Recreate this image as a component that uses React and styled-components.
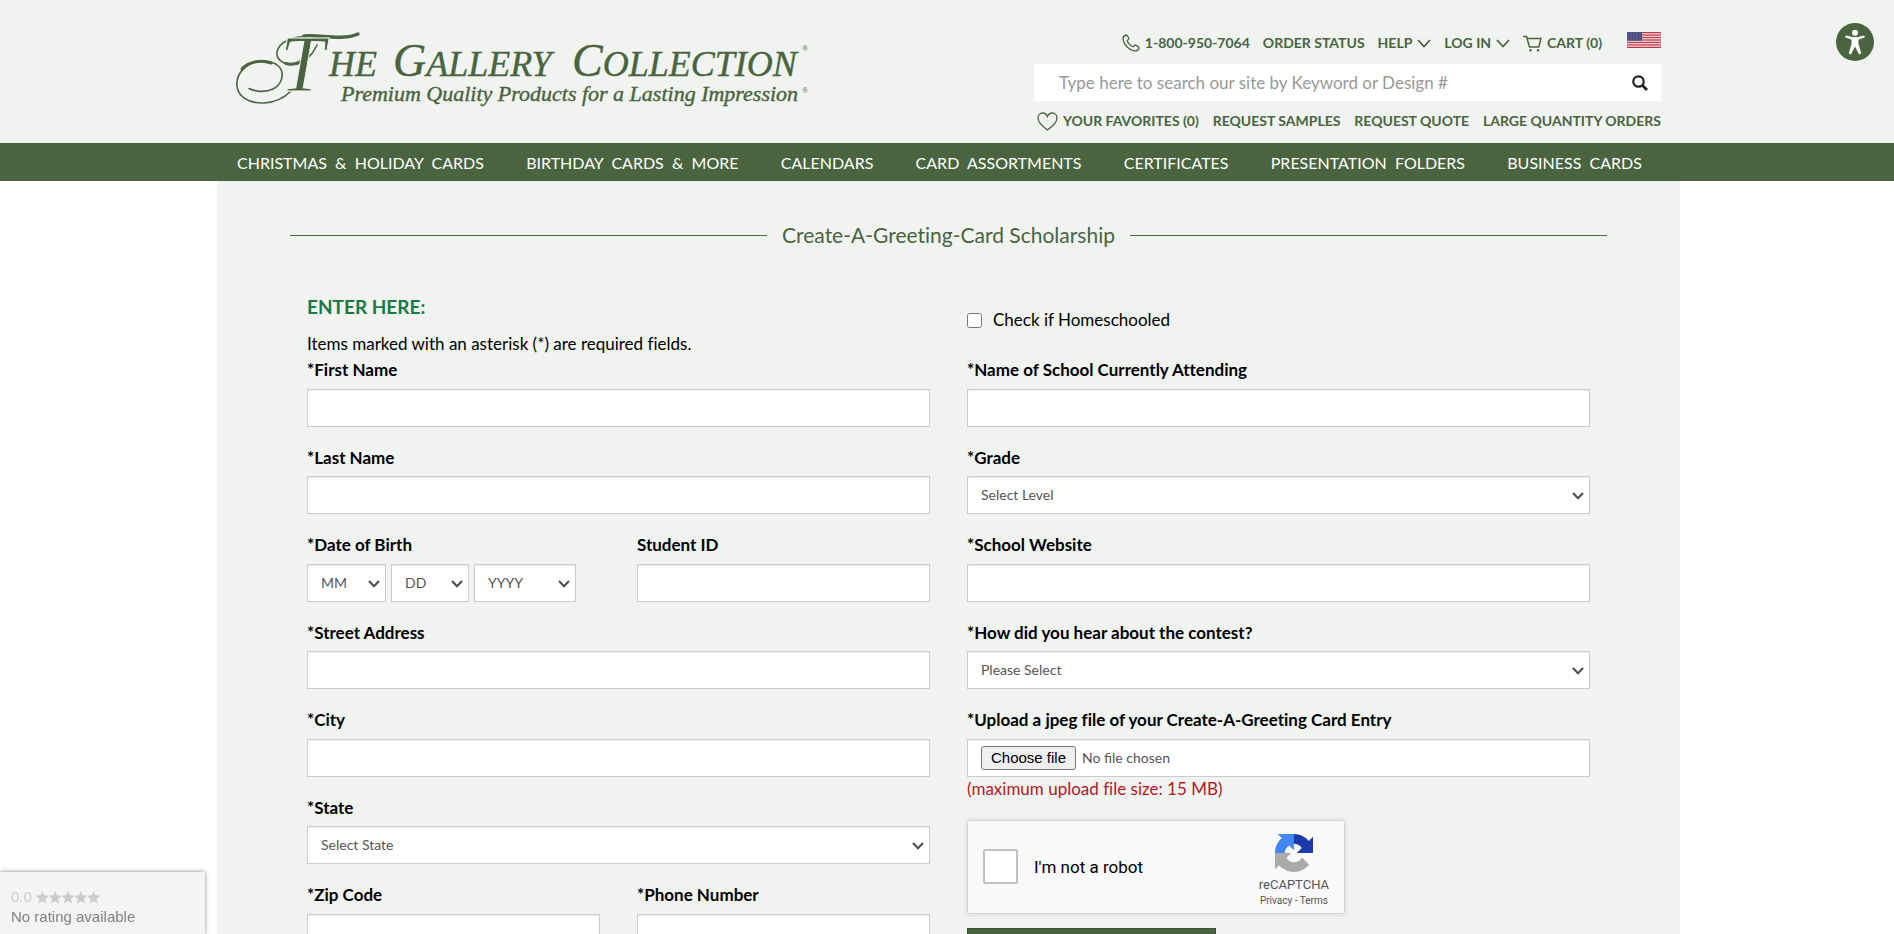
import React from "react";
import styled, { createGlobalStyle } from "styled-components";

const green = "#49643f";
const pale = "#f0f3f0";

const Global = createGlobalStyle`
  *, *::before, *::after { box-sizing: border-box; }
  body {
    margin: 0;
    background: #fff;
    color: #000;
    font-family: Lato, "Open Sans", sans-serif;
    font-size: 17px;
    font-weight: 400;
    font-variant-ligatures: none;
    line-height: 1.5;
  }
`;

const Header = styled.header`
  background: ${pale};
  padding-left: 3px;
`;

const HeaderInner = styled.div`
  display: flex;
  justify-content: space-between;
  align-items: flex-start;
  max-width: 1425px;
  margin: 0 auto;
  padding: 14px 0 2px;
`;

const LogoLink = styled.a`
  display: block;
  svg { display: block; }
`;

const Tools = styled.div`
  width: 627px;
  padding-top: 12px;
`;

const ToolRow = styled.div`
  display: flex;
  align-items: center;
  justify-content: ${(p) => (p.$spread ? "space-between" : "flex-end")};
  gap: ${(p) => (p.$spread ? "0" : "13px")};
  height: ${(p) => (p.$spread ? "40px" : "34px")};
  padding-left: 3px;
`;

const ToolLink = styled.a`
  display: flex;
  align-items: center;
  gap: 5px;
  color: ${green};
  font-size: 14px;
  font-weight: 700;
  line-height: 20px;
  text-decoration: none;
  white-space: nowrap;
  svg { flex: none; }
`;

const MenuButton = styled.button`
  display: flex;
  align-items: center;
  gap: 5px;
  padding: 0;
  border: 0;
  background: none;
  color: ${green};
  font: 700 14px/20px Lato, "Open Sans", sans-serif;
  white-space: nowrap;
`;

const FlagButton = styled.button`
  align-self: flex-start;
  margin: 6px 0 0 12px;
  padding: 0;
  border: 0;
  background: none;
  svg { display: block; }
`;

const Search = styled.form`
  display: flex;
  height: 37px;
  margin-top: 4px;
  background: #fff;
`;

const SearchInput = styled.input`
  flex: 1;
  min-width: 0;
  padding: 0 0 0 25px;
  border: 0;
  background: none;
  color: #333;
  font: 400 17px/24px Lato, "Open Sans", sans-serif;
  &::placeholder { color: #999; opacity: 1; }
`;

const SearchButton = styled.button`
  display: flex;
  align-items: center;
  justify-content: center;
  width: 42px;
  padding: 0;
  border: 0;
  background: none;
`;

const Nav = styled.nav`
  background: ${green};
  padding-left: 3px;
`;

const NavList = styled.ul`
  display: flex;
  justify-content: space-between;
  max-width: 1425px;
  height: 38px;
  margin: 0 auto;
  padding: 0 19px 0 1px;
  list-style: none;
`;

const NavLink = styled.a`
  color: #fff;
  font-size: 16px;
  line-height: 40px;
  text-decoration: none;
  white-space: pre;
`;

const Page = styled.div`
  padding-left: 3px;
`;

const Sheet = styled.main`
  max-width: 1463px;
  min-height: calc(100vh - 181px);
  margin: 0 auto;
  padding: 37px 73px 24px;
  background: ${pale};
`;

const Title = styled.h1`
  display: flex;
  align-items: center;
  gap: 15px;
  margin: 0 0 38px;
  color: ${green};
  font-size: 21px;
  font-weight: 400;
  line-height: 34px;
  white-space: nowrap;
  &::before, &::after {
    content: "";
    flex: 1;
    height: 1px;
    background: ${green};
  }
`;

const Form = styled.form`
  display: grid;
  grid-template-columns: 1fr 1fr;
  gap: 37px;
  padding: 0 17px;
`;

const Column = styled.div`
  min-width: 0;
`;

const ColumnHead = styled.div`
  height: 67px;
`;

const Heading = styled.h2`
  margin: 0 0 8px;
  color: #1a7a45;
  font-size: 19px;
  font-weight: 700;
  line-height: 34px;
`;

const Note = styled.p`
  margin: 0;
  font-size: 17px;
  line-height: 24px;
`;

const CheckLabel = styled.label`
  display: flex;
  align-items: center;
  gap: 11px;
  padding-top: 18px;
  line-height: 24px;
  input { width: 15px; height: 15px; margin: 0; }
`;

const Field = styled.div`
  margin-bottom: ${(p) => (p.$tight ? "0" : "18px")};
`;

const Label = styled.label`
  display: block;
  margin-bottom: 6px;
  font-size: 17px;
  font-weight: 700;
`;

const GroupLabel = styled.span`
  display: block;
  margin-bottom: 6px;
  font-size: 17px;
  font-weight: 700;
`;

const control = `
  width: 100%;
  height: 38px;
  border: 1px solid #ccc;
  border-radius: 0;
  background-color: #fff;
  box-shadow: inset 0 1px 1px rgba(0, 0, 0, 0.075);
  color: #555;
  font: 400 14px/20px Lato, "Open Sans", sans-serif;
`;

const Input = styled.input`
  ${control}
  display: block;
  padding: 6px 12px;
`;

const SelectBox = styled.div`
  position: relative;
  width: ${(p) => p.$w || "100%"};
  svg {
    position: absolute;
    top: 16px;
    right: 6px;
    pointer-events: none;
  }
`;

const Select = styled.select`
  ${control}
  display: block;
  appearance: none;
  padding: 6px 13px;
`;

const Pair = styled.div`
  display: grid;
  grid-template-columns: 1fr 1fr;
  gap: 37px;
`;

const DateRow = styled.div`
  display: flex;
  gap: 5px;
`;

const FileBox = styled.label`
  ${control}
  position: relative;
  display: flex;
  align-items: center;
  gap: 6px;
  padding: 0 13px;
  input {
    position: absolute;
    inset: 0;
    width: 100%;
    opacity: 0;
  }
`;

const FileButton = styled.span`
  padding: 0 9px;
  border: 1px solid #767676;
  border-radius: 3px;
  background: #efefef;
  color: #000;
  font: 400 15px/22px "Liberation Sans", Arial, sans-serif;
`;

const Limit = styled.p`
  margin: 0 0 19px;
  color: #b8171b;
  font-size: 17px;
  line-height: 24px;
`;

const Captcha = styled.div`
  display: flex;
  align-items: center;
  justify-content: space-between;
  width: 378px;
  height: 94px;
  margin-bottom: 14px;
  padding: 0 15px;
  border: 1px solid #d3d3d3;
  border-radius: 3px;
  background: #f9f9f9;
  box-shadow: 0 0 4px 1px rgba(0, 0, 0, 0.08);
  font-family: Roboto, sans-serif;
`;

const RobotLabel = styled.label`
  display: flex;
  align-items: center;
  gap: 16px;
  font-size: 17px;
  line-height: 24px;
  input {
    appearance: none;
    width: 35px;
    height: 35px;
    margin: 0;
    border: 2px solid #c1c1c1;
    border-radius: 2px;
    background: #fff;
  }
`;

const Badge = styled.div`
  display: flex;
  flex-direction: column;
  align-items: center;
  padding-top: 10px;
  color: #555;
  font-size: 13px;
  line-height: 16px;
  small { font-size: 10px; }
  a { color: inherit; text-decoration: none; }
  svg { display: block; margin-bottom: 5px; }
`;

const Submit = styled.button`
  width: 249px;
  height: 46px;
  border: 1px solid #3a5232;
  background: ${green};
`;

const Rating = styled.aside`
  position: fixed;
  left: 0;
  bottom: 0;
  width: 205px;
  height: 62px;
  padding: 15px 11px 0;
  background: #f4f4f4;
  box-shadow: 0 0 4px rgba(0, 0, 0, 0.5);
  color: #808080;
  font: 400 15px/20px "Liberation Sans", Arial, sans-serif;
`;

const Score = styled.div`
  display: flex;
  align-items: center;
  gap: 4px;
  color: #ccc;
`;

const Access = styled.button`
  position: fixed;
  top: 23px;
  right: 20px;
  width: 38px;
  height: 38px;
  padding: 0;
  border: 0;
  border-radius: 50%;
  background: ${green};
  svg { display: block; }
`;

const Logo = () => (
  <svg width="580" height="100" viewBox="236 14 580 100" fill={green} fontFamily="Liberation Serif, Times New Roman, serif" fontStyle="italic" overflow="visible" role="img" aria-label="The Gallery Collection">
    <g fill="none" stroke={green} strokeLinecap="round">
      <path d="M249 88.500C256 92 266 92.500 273 89C281 85 284 76 281 69.500C278 63 269 60.500 260 61.500C246 63 237 73 236.800 84C237 97 249 103.500 264 103C276 102.500 284 98 291 91" strokeWidth="1.600" />
      <path d="M242 69C248 62 261 59 271 63" strokeWidth="3" />
      <path d="M317 45C313 54 305 64 294 64.500C284 65 276 60 277 52C279 42 292 36 312 36" strokeWidth="1.600" />
      <path d="M286 63.500C295 66 303 61 309 55" strokeWidth="3" />
      <path d="M304 36C320 34.500 342 41 358 34" strokeWidth="3.400" />
    </g>
    <text x="280" y="91" fontSize="80" stroke={pale} strokeWidth="1">T</text>
    <g stroke={green} strokeWidth="0.400">
      <text y="76" fontSize="36">
        <tspan x="329">HE</tspan>
        <tspan x="393" fontSize="46">G</tspan>
        <tspan>ALLERY</tspan>
        <tspan x="572" fontSize="46">C</tspan>
        <tspan>OLLECTION</tspan>
      </text>
      <text x="341" y="101" fontSize="22">Premium Quality Products for a Lasting Impression</text>
    </g>
    <text x="802" y="51" fontSize="8" fontStyle="normal">®</text>
    <text x="802" y="93" fontSize="8" fontStyle="normal">®</text>
  </svg>
);

const Chevron = () => (
  <svg width="14" height="9" viewBox="0 0 14 9" fill="none" stroke={green} strokeWidth="1.800">
    <path d="M1 1L7 7.500L13 1" />
  </svg>
);

const Phone = () => (
  <svg width="18" height="18" viewBox="0 0 18 18" fill="none" stroke={green} strokeWidth="1.300" strokeLinejoin="round">
    <path d="M4.200 1C2 1.600 .8 3.400 1.100 5.600C2 11 7 16 12.400 16.900C14.600 17.200 16.600 16 17.100 13.800C17.100 13.100 13.900 10.900 13.100 11.100C12.400 11.300 12 12.800 11.200 12.700C9 12.200 5.800 9 5.300 6.800C5.200 6 6.800 5.600 6.900 4.900C7.100 4.100 4.900 1 4.200 1Z" />
  </svg>
);

const Cart = () => (
  <svg width="19" height="17" viewBox="0 0 19 17" fill="none" stroke={green} strokeWidth="1.500">
    <path d="M0 1.500H3.500L6.500 12H16M4.200 3.500H18L15.800 12" />
    <circle cx="7.500" cy="15.300" r="1.200" fill={green} stroke="none" />
    <circle cx="15" cy="15.300" r="1.200" fill={green} stroke="none" />
  </svg>
);

const Heart = () => (
  <svg width="21" height="19" viewBox="0 0 21 19" fill="none" stroke={green} strokeWidth="1.300">
    <path d="M10.500 18C7 15.500 1 11 1 6C1 3 3 1 5.600 1C8 1 9.800 2.600 10.500 4.600C11.200 2.600 13 1 15.400 1C18 1 20 3 20 6C20 11 14 15.500 10.500 18Z" />
  </svg>
);

const Flag = () => (
  <svg width="34" height="16" viewBox="0 0 34 16">
    <rect width="34" height="16" fill="#f3dcdf" />
    {[0, 1, 2, 3, 4, 5, 6].map((i) => (
      <rect key={i} y={i * 2.46} width="34" height="1.230" fill="#b83a4b" />
    ))}
    <rect width="15" height="8.600" fill="#4a4b7c" />
    {[1, 3, 5, 7].map((y) =>
      [1, 4, 7, 10, 13].map((x) => <circle key={`${x}-${y}`} cx={x} cy={y} r=".4" fill="#b9b9d2" />)
    )}
  </svg>
);

const Recaptcha = () => (
  <svg width="38" height="38" viewBox="0 0 64 64">
    <path fill="#1c3aa9" d="M64 31.955l-.033-1.370V4.687l-7.160 7.160C50.948 4.674 42.033.093 32.050.093c-10.389 0-19.622 4.960-25.458 12.640l11.736 11.860a15.550 15.550 0 0 1 4.754-5.334c2.050-1.600 4.952-2.906 8.968-2.906.485 0 .86.057 1.135.163 4.976.393 9.288 3.140 11.828 7.124l-8.307 8.307c10.522-.04 22.400-.066 27.295.005" />
    <path fill="#4285f4" d="M31.862.094l-1.370.033H4.594l7.160 7.160C4.580 13.147 0 22.060 0 32.046c0 10.388 4.960 19.622 12.640 25.458L24.500 45.768a15.550 15.550 0 0 1-5.334-4.754c-1.600-2.050-2.906-4.952-2.906-8.968 0-.485.057-.86.163-1.135.393-4.976 3.140-9.288 7.124-11.828l8.307 8.307c-.04-10.522-.066-22.400.005-27.295" />
    <path fill="#ababab" d="M.001 32.045l.033 1.370v25.898l7.160-7.160c5.860 7.173 14.774 11.754 24.760 11.754 10.388 0 19.622-4.960 25.458-12.640l-11.736-11.860a15.550 15.550 0 0 1-4.754 5.334c-2.050 1.600-4.952 2.906-8.968 2.906-.485 0-.86-.057-1.135-.163-4.976-.393-9.288-3.140-11.828-7.124l8.307-8.307c-10.522.04-22.400.066-27.295-.005" />
  </svg>
);

const Stars = () => (
  <svg width="64" height="13" viewBox="0 0 65 13" fill="#ccc">
    {[0, 13, 26, 39, 52].map((x) => (
      <path key={x} transform={`translate(${x} 0)`} d="M6.500 0L8.300 4.300L13 4.800L9.500 7.900L10.500 12.500L6.500 10.100L2.500 12.500L3.500 7.900L0 4.800L4.700 4.300Z" />
    ))}
  </svg>
);

const Person = () => (
  <svg width="38" height="38" viewBox="0 0 38 38" fill="#fff">
    <circle cx="19" cy="9.800" r="3" />
    <path d="M10.500 12.600L16 14H22L27.500 12.600Q29 12.600 28.800 14.200L22.500 16.700V21L25.200 30Q24.500 31.800 22.800 31L19 23.500L15.200 31Q13.500 31.800 12.800 30L15.500 21V16.700L9.200 14.200Q9 12.600 10.500 12.600Z" />
  </svg>
);

const navItems = [
  "CHRISTMAS  &  HOLIDAY  CARDS",
  "BIRTHDAY  CARDS  &  MORE",
  "CALENDARS",
  "CARD  ASSORTMENTS",
  "CERTIFICATES",
  "PRESENTATION  FOLDERS",
  "BUSINESS  CARDS",
];

const DropDown = ({ option, width, ...rest }) => (
  <SelectBox $w={width}>
    <Select {...rest}>
      <option>{option}</option>
    </Select>
    <svg width="12" height="8" viewBox="0 0 12 8" fill="none" stroke="#4d4d4d" strokeWidth="2">
      <path d="M1 1L6 6.300L11 1" />
    </svg>
  </SelectBox>
);

const TextField = ({ id, label, type = "text" }) => (
  <Field>
    <Label htmlFor={id}>{label}</Label>
    <Input id={id} type={type} />
  </Field>
);

const SelectField = ({ id, label, option }) => (
  <Field>
    <Label htmlFor={id}>{label}</Label>
    <DropDown id={id} option={option} />
  </Field>
);

export default function App() {
  return (
    <>
      <Global />
      <Header>
        <HeaderInner>
          <LogoLink href="#home"><Logo /></LogoLink>
          <Tools>
            <ToolRow>
              <ToolLink href="tel:18009507064"><Phone />1-800-950-7064</ToolLink>
              <ToolLink href="#status">ORDER STATUS</ToolLink>
              <MenuButton type="button">HELP<Chevron /></MenuButton>
              <MenuButton type="button">LOG IN<Chevron /></MenuButton>
              <ToolLink href="#cart"><Cart />CART (0)</ToolLink>
              <FlagButton type="button" aria-label="United States"><Flag /></FlagButton>
            </ToolRow>
            <Search role="search">
              <SearchInput type="text" aria-label="Search" placeholder="Type here to search our site by Keyword or Design #" />
              <SearchButton type="button" aria-label="Search">
                <svg width="16" height="16" viewBox="0 0 16 16" fill="none" stroke="#222" strokeWidth="2.200">
                  <circle cx="6.500" cy="6.500" r="5.200" />
                  <path d="M10.300 10.300L15 15" strokeWidth="2.800" />
                </svg>
              </SearchButton>
            </Search>
            <ToolRow $spread>
              <ToolLink href="#favorites"><Heart />YOUR FAVORITES (0)</ToolLink>
              <ToolLink href="#samples">REQUEST SAMPLES</ToolLink>
              <ToolLink href="#quote">REQUEST QUOTE</ToolLink>
              <ToolLink href="#large">LARGE QUANTITY ORDERS</ToolLink>
            </ToolRow>
          </Tools>
        </HeaderInner>
      </Header>
      <Nav>
        <NavList>
          {navItems.map((t) => (
            <li key={t}><NavLink href="#cards">{t}</NavLink></li>
          ))}
        </NavList>
      </Nav>
      <Page>
        <Sheet>
          <Title>Create-A-Greeting-Card Scholarship</Title>
          <Form>
            <Column>
              <ColumnHead>
                <Heading>ENTER HERE:</Heading>
                <Note>Items marked with an asterisk (*) are required fields.</Note>
              </ColumnHead>
              <TextField id="first" label="*First Name" />
              <TextField id="last" label="*Last Name" />
              <Pair>
                <Field>
                  <GroupLabel id="dob">*Date of Birth</GroupLabel>
                  <DateRow role="group" aria-labelledby="dob">
                    <DropDown aria-label="Month" width="79px" option="MM" />
                    <DropDown aria-label="Day" width="78px" option="DD" />
                    <DropDown aria-label="Year" width="102px" option="YYYY" />
                  </DateRow>
                </Field>
                <TextField id="student" label="Student ID" />
              </Pair>
              <TextField id="street" label="*Street Address" />
              <TextField id="city" label="*City" />
              <SelectField id="state" label="*State" option="Select State" />
              <Pair>
                <TextField id="zip" label="*Zip Code" />
                <TextField id="phone" label="*Phone Number" type="tel" />
              </Pair>
            </Column>
            <Column>
              <ColumnHead>
                <CheckLabel><input type="checkbox" />Check if Homeschooled</CheckLabel>
              </ColumnHead>
              <TextField id="school" label="*Name of School Currently Attending" />
              <SelectField id="grade" label="*Grade" option="Select Level" />
              <TextField id="site" label="*School Website" />
              <SelectField id="hear" label="*How did you hear about the contest?" option="Please Select" />
              <Field $tight>
                <Label htmlFor="entry">*Upload a jpeg file of your Create-A-Greeting Card Entry</Label>
                <FileBox>
                  <input id="entry" type="file" accept="image/jpeg" />
                  <FileButton>Choose file</FileButton>
                  <span>No file chosen</span>
                </FileBox>
              </Field>
              <Limit>(maximum upload file size: 15 MB)</Limit>
              <Captcha>
                <RobotLabel><input type="checkbox" />I'm not a robot</RobotLabel>
                <Badge>
                  <Recaptcha />
                  reCAPTCHA
                  <small><a href="#privacy">Privacy</a> - <a href="#terms">Terms</a></small>
                </Badge>
              </Captcha>
              <Submit type="button" aria-label="Submit" />
            </Column>
          </Form>
        </Sheet>
      </Page>
      <Rating>
        <Score>0.0 <Stars /></Score>
        No rating available
      </Rating>
      <Access type="button" aria-label="Accessibility"><Person /></Access>
    </>
  );
}
